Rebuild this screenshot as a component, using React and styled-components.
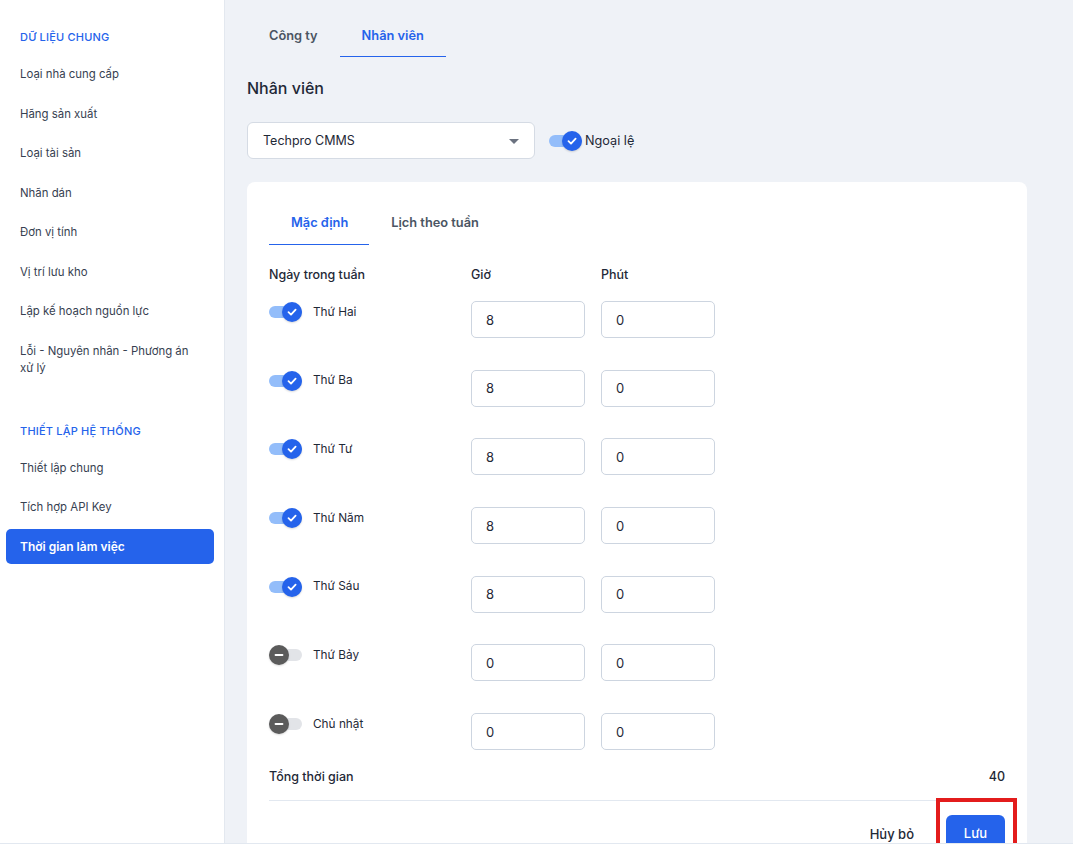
import styled, { createGlobalStyle } from "styled-components";

const GlobalStyle = createGlobalStyle`
  html, body {
    margin: 0;
    padding: 0;
    height: 100%;
    overflow: hidden;
  }
  body {
    font-family: Inter, "Noto Sans", Roboto, sans-serif;
    color: #1f2937;
    background: #ffffff;
  }
  * {
    box-sizing: border-box;
  }
`;

const menu = [
  {
    title: "DỮ LIỆU CHUNG",
    items: [
      "Loại nhà cung cấp",
      "Hãng sản xuất",
      "Loại tài sản",
      "Nhãn dán",
      "Đơn vị tính",
      "Vị trí lưu kho",
      "Lập kế hoạch nguồn lực",
      "Lỗi - Nguyên nhân - Phương án xử lý",
    ],
  },
  {
    title: "THIẾT LẬP HỆ THỐNG",
    items: ["Thiết lập chung", "Tích hợp API Key", "Thời gian làm việc"],
  },
];

const days = [
  { name: "Thứ Hai", on: true, hour: 8, minute: 0 },
  { name: "Thứ Ba", on: true, hour: 8, minute: 0 },
  { name: "Thứ Tư", on: true, hour: 8, minute: 0 },
  { name: "Thứ Năm", on: true, hour: 8, minute: 0 },
  { name: "Thứ Sáu", on: true, hour: 8, minute: 0 },
  { name: "Thứ Bảy", on: false, hour: 0, minute: 0 },
  { name: "Chủ nhật", on: false, hour: 0, minute: 0 },
];

function Toggle({ on }) {
  return (
    <Track $on={on}>
      <Thumb $on={on}>
        {on ? (
          <svg width="12" height="12" viewBox="0 0 12 12">
            <path
              d="M2.5 6.2 L5 8.6 L9.6 3.6"
              fill="none"
              stroke="#fff"
              strokeWidth="1.8"
              strokeLinecap="round"
              strokeLinejoin="round"
            />
          </svg>
        ) : (
          <svg width="12" height="12" viewBox="0 0 12 12">
            <path d="M2.5 6 H9.5" stroke="#fff" strokeWidth="1.8" strokeLinecap="round" />
          </svg>
        )}
      </Thumb>
    </Track>
  );
}

export default function App() {
  const total = days.reduce((s, d) => s + (d.on ? d.hour : 0), 0);
  return (
    <>
      <GlobalStyle />
      <Page>
        <Body>
          <Sidebar>
            {menu.map((section) => (
              <Section key={section.title}>
                <SectionTitle>{section.title}</SectionTitle>
                {section.items.map((item) => (
                  <MenuItem key={item} $active={item === "Thời gian làm việc"}>
                    {item}
                  </MenuItem>
                ))}
              </Section>
            ))}
          </Sidebar>

          <Main>
            <Tabs>
              <Tab>Công ty</Tab>
              <Tab $active>Nhân viên</Tab>
            </Tabs>

            <Heading>Nhân viên</Heading>

            <FilterRow>
              <Select>
                <span>Techpro CMMS</span>
                <Caret />
              </Select>
              <Toggle on />
              <ToggleLabel>Ngoại lệ</ToggleLabel>
            </FilterRow>

            <Card>
              <InnerTabs>
                <InnerTab $active>Mặc định</InnerTab>
                <InnerTab>Lịch theo tuần</InnerTab>
              </InnerTabs>

              <Grid>
                <ColHead>Ngày trong tuần</ColHead>
                <ColHead>Giờ</ColHead>
                <ColHead>Phút</ColHead>
                {days.map((d) => (
                  <Row key={d.name}>
                    <DayCell>
                      <Toggle on={d.on} />
                      <DayName>{d.name}</DayName>
                    </DayCell>
                    <NumInput value={d.hour} readOnly />
                    <NumInput value={d.minute} readOnly />
                  </Row>
                ))}
              </Grid>

              <TotalRow>
                <span>Tổng thời gian</span>
                <span>{total}</span>
              </TotalRow>

              <Actions>
                <CancelButton>Hủy bỏ</CancelButton>
                <SaveWrap>
                  <SaveButton>Lưu</SaveButton>
                  <Highlight />
                </SaveWrap>
              </Actions>
            </Card>
          </Main>
        </Body>
        <Footer />
      </Page>
    </>
  );
}

const Page = styled.div`
  height: 100vh;
  display: flex;
  flex-direction: column;
`;

const Body = styled.div`
  flex: 1;
  min-height: 0;
  display: flex;
`;

const Sidebar = styled.aside`
  width: 225px;
  flex-shrink: 0;
  background: #ffffff;
  border-right: 1px solid #e3e8ef;
  padding: 30px 10px 0 6px;
`;

const Section = styled.div`
  & + & {
    margin-top: 35px;
  }
`;

const SectionTitle = styled.div`
  padding-left: 14px;
  font-size: 11px;
  line-height: 14px;
  font-weight: 500;
  letter-spacing: 0.2px;
  color: #2563eb;
  margin-bottom: 11px;
`;

const MenuItem = styled.div`
  padding: ${(p) => (p.$active ? "9px 14px" : "11px 14px")};
  margin-top: ${(p) => (p.$active ? "1px" : "0")};
  font-size: ${(p) => (p.$active ? "12px" : "11.4px")};
  line-height: 17.5px;
  color: ${(p) => (p.$active ? "#ffffff" : "#374151")};
  font-weight: ${(p) => (p.$active ? 600 : 400)};
  background: ${(p) => (p.$active ? "#2563eb" : "transparent")};
  border-radius: 5px;
`;

const Main = styled.main`
  flex: 1;
  min-width: 0;
  background: #eff2f7;
  padding: 15px 46px 0 22px;
  overflow: hidden;
`;

const Tabs = styled.div`
  display: flex;
`;

const Tab = styled.div`
  padding: 13px 22px 12px 22px;
  font-size: 12.8px;
  line-height: 16px;
  font-weight: 600;
  color: ${(p) => (p.$active ? "#2563eb" : "#4b5563")};
  border-bottom: 1.5px solid ${(p) => (p.$active ? "#2563eb" : "transparent")};
`;

const Heading = styled.h2`
  margin: 21px 0 0;
  font-size: 16px;
  line-height: 20px;
  font-weight: 500;
  color: #1f2937;
`;

const FilterRow = styled.div`
  margin-top: 24px;
  display: flex;
  align-items: center;
`;

const Select = styled.div`
  width: 288px;
  height: 37px;
  background: #ffffff;
  border: 1px solid #d5dbe4;
  border-radius: 6px;
  display: flex;
  align-items: center;
  justify-content: space-between;
  padding: 0 15px 0 15px;
  font-size: 12.5px;
  color: #1f2937;
  margin-right: 14px;
`;

const Caret = styled.span`
  width: 0;
  height: 0;
  border-left: 5px solid transparent;
  border-right: 5px solid transparent;
  border-top: 5px solid #6b7280;
  margin-top: 1px;
`;

const ToggleLabel = styled.span`
  margin-left: 3px;
  font-size: 12.7px;
  color: #1f2937;
`;

const Track = styled.span`
  position: relative;
  display: inline-flex;
  align-items: center;
  justify-content: ${(p) => (p.$on ? "flex-end" : "flex-start")};
  width: 33px;
  height: 20px;
  flex-shrink: 0;

  &::before {
    content: "";
    position: absolute;
    left: 0;
    right: 0;
    top: 4px;
    height: 12px;
    border-radius: 6px;
    background: ${(p) => (p.$on ? "#93bdfa" : "#e2e4e8")};
  }
`;

const Thumb = styled.span`
  position: relative;
  width: 20px;
  height: 20px;
  border-radius: 50%;
  background: ${(p) => (p.$on ? "#2563eb" : "#5b5b5b")};
  display: flex;
  align-items: center;
  justify-content: center;
  box-shadow: 0 1px 2px rgba(0, 0, 0, 0.15);
`;

const Card = styled.section`
  margin-top: 23px;
  background: #ffffff;
  border-radius: 8px;
  padding: 18px 22px 40px;
`;

const InnerTabs = styled.div`
  display: flex;
`;

const InnerTab = styled.div`
  padding: 15px 21px 13px 22px;
  font-size: 12.8px;
  line-height: 16px;
  font-weight: 600;
  color: ${(p) => (p.$active ? "#2563eb" : "#4b5563")};
  border-bottom: 1.5px solid ${(p) => (p.$active ? "#2563eb" : "transparent")};
`;

const Grid = styled.div`
  margin-top: 22px;
  display: grid;
  grid-template-columns: 186px 114px 114px;
  column-gap: 16px;
`;

const ColHead = styled.div`
  font-size: 12.5px;
  line-height: 16px;
  font-weight: 500;
  color: #1f2937;
  margin-bottom: 18px;
`;

const Row = styled.div`
  display: contents;

  & > * {
    margin-bottom: 31.7px;
  }

  &:last-child > * {
    margin-bottom: 0;
  }
`;

const DayCell = styled.div`
  display: flex;
  align-items: center;
  height: 20px;
  margin-top: 1px;
`;

const DayName = styled.span`
  margin-left: 11px;
  font-size: 11.8px;
  color: #1f2937;
  margin-top: -1px;
`;

const NumInput = styled.input`
  width: 114px;
  height: 37px;
  border: 1px solid #cdd5e0;
  border-radius: 5px;
  padding: 0 14px;
  font-family: inherit;
  font-size: 13px;
  color: #1f2937;
  background: #ffffff;
  outline: none;
`;

const TotalRow = styled.div`
  margin-top: 19px;
  display: flex;
  justify-content: space-between;
  font-size: 12.5px;
  line-height: 16px;
  font-weight: 500;
  color: #1f2937;
  padding-bottom: 15px;
  border-bottom: 1px solid #e2e8f0;
`;

const Actions = styled.div`
  margin-top: 13px;
  display: flex;
  justify-content: flex-end;
  align-items: center;
  gap: 16px;
`;

const CancelButton = styled.button`
  border: none;
  background: transparent;
  font-family: inherit;
  font-size: 13px;
  font-weight: 500;
  color: #1f2937;
  padding: 0 16px;
  height: 36px;
  margin-top: 2px;
`;

const SaveWrap = styled.div`
  position: relative;
`;

const SaveButton = styled.button`
  width: 59px;
  height: 36px;
  border: none;
  border-radius: 6px;
  background: #2563eb;
  color: #ffffff;
  font-family: inherit;
  font-size: 13px;
  font-weight: 500;
`;

const Highlight = styled.div`
  position: absolute;
  left: -10px;
  top: -17px;
  right: -12px;
  bottom: -1px;
  border: 4px solid #e31c1c;
  pointer-events: none;
`;

const Footer = styled.footer`
  height: 10px;
  flex-shrink: 0;
  background: #ffffff;
  border-top: 1px solid #e2e8f0;
`;
